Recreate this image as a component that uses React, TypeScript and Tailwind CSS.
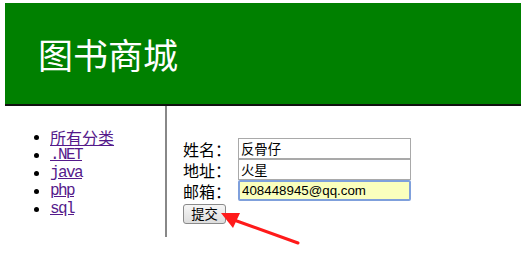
import React from "react";

const cjk = { fontFamily: '"Noto Sans CJK SC", "Liberation Sans", sans-serif' };
const mono = { fontFamily: '"Liberation Mono", "Courier New", monospace' };

export default function App() {
  const links = [".NET", "java", "php", "sql"];
  const items = [{ t: "所有分类", s: cjk, tr: "" }, ...links.map((l) => ({ t: l, s: mono, tr: "tracking-[-1.6px]" }))];
  return (
    <div className="relative w-[521px] h-[263px] overflow-hidden bg-white pl-[5px] pt-[3px]">
      <div className="h-[103px] bg-[#008000] border-b-2 border-[#111] flex items-center pl-[33px]">
        <h1 className="text-[35px] leading-none text-white font-normal" style={cjk}>
          图书商城
        </h1>
      </div>
      <div className="flex">
        <div className="w-[162px] h-[131px] border-r-2 border-[#888] pt-[22px] pl-[29px]">
          <ul className="flex flex-col">
            {items.map((it) => (
              <li key={it.t} className="flex items-center h-[18px]">
                <span className="w-[5px] h-[5px] rounded-full bg-black mr-[11px] shrink-0" />
                <a
                  href="#"
                  className={"text-[#551A8B] underline text-[16px] leading-[18px] " + it.tr}
                  style={it.s}
                >
                  {it.t}
                </a>
              </li>
            ))}
          </ul>
        </div>
        <div className="pt-[32px] pl-[16px]">
          {[
            { label: "姓名：", value: "反骨仔", focus: false },
            { label: "地址：", value: "火星", focus: false },
            { label: "邮箱：", value: "408448945@qq.com", focus: true },
          ].map((r) => (
            <div key={r.label} className="flex items-center h-[21px]">
              <span className="w-[55px] text-[16px] leading-[20px] text-black" style={cjk}>
                {r.label}
              </span>
              <input
                readOnly
                value={r.value}
                className={
                  r.focus
                    ? "w-[173px] h-[21px] px-[2px] text-[13.33px] text-black bg-[#FAFFBD] border-2 border-[#7fa0dc] rounded-[2px] outline-none"
                    : "w-[173px] h-[21px] px-[2px] text-[13.33px] text-black bg-white border border-[#a9a9a9] outline-none"
                }
                style={{ fontFamily: '"Liberation Sans", "Noto Sans CJK SC", sans-serif' }}
              />
            </div>
          ))}
          <button
            className="w-[43px] h-[20px] text-[13.33px] leading-none text-black border border-[#8a8a8a] rounded-[3px] bg-gradient-to-b from-[#f6f6f6] to-[#dddddd]"
            style={cjk}
          >
            提交
          </button>
        </div>
      </div>
      <svg className="absolute left-0 top-0 pointer-events-none" width="521" height="263">
        <line x1="298" y1="243" x2="234" y2="220" stroke="#ff1a1a" strokeWidth="3" strokeLinecap="round" />
        <polygon points="221,213 240,213 233,228" fill="#ff1a1a" />
      </svg>
    </div>
  );
}
